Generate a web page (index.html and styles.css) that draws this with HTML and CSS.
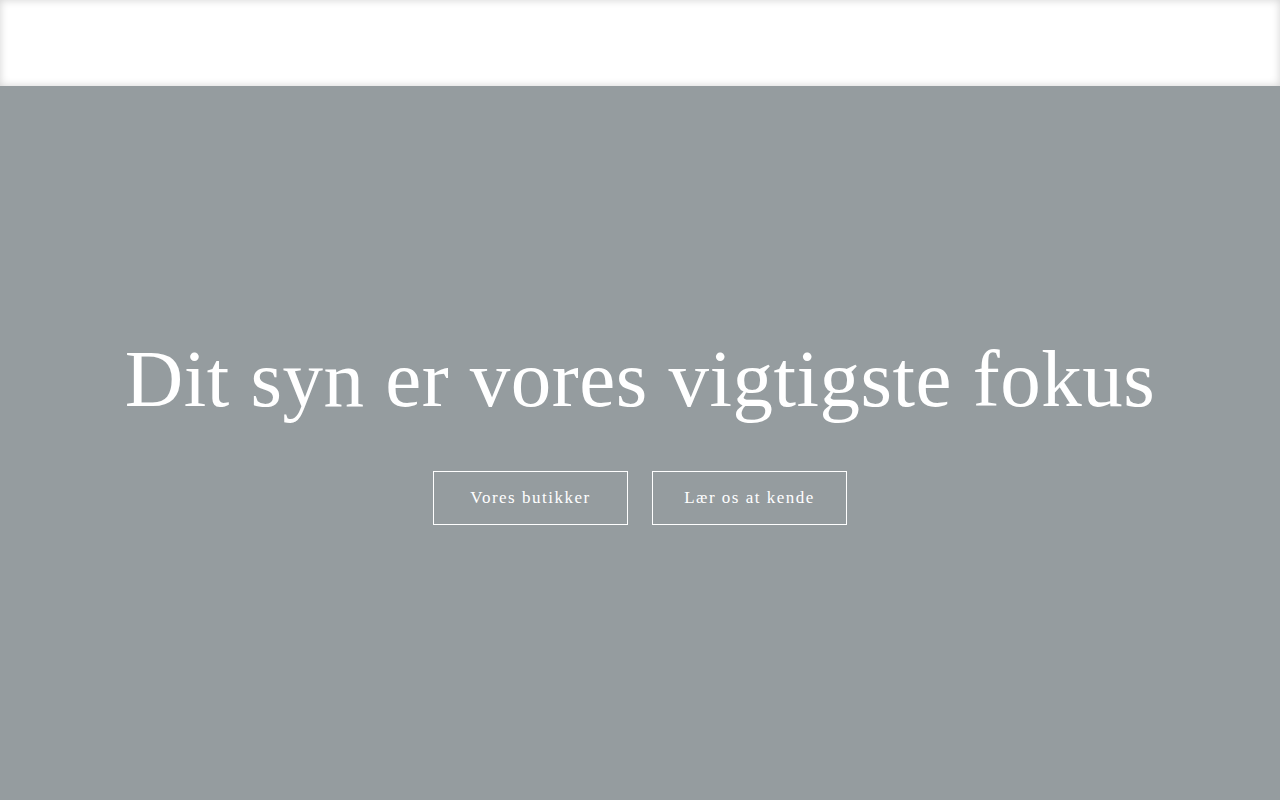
FILE: index.html
```html
<!DOCTYPE html>
<html lang="da">
<head>
    <meta charset="UTF-8">
    <meta name="viewport" content="width=device-width, initial-scale=1.0">
    <title>Dit syn er vores vigtigste fokus</title>
    <link rel="stylesheet" href="styles.css">
</head>
<body>

<header class="site-header"></header>

<section class="hero">
    <div class="hero-content">
        <h1 class="hero-title">Dit syn er vores vigtigste fokus</h1>
        <div class="hero-buttons">
            <a class="hero-btn" href="#">Vores butikker</a>
            <a class="hero-btn" href="#">Lær os at kende</a>
        </div>
    </div>
</section>

</body>
</html>
```

FILE: styles.css
```css
html, body {
    margin: 0;
    padding: 0;
}

body {
    font-family: "Liberation Serif", "DejaVu Serif", serif;
    background-color: #959c9f;
    height: 800px;
    overflow: hidden;
}

.site-header {
    height: 86px;
    background-color: #fff;
    box-shadow: inset 0 0 8px rgba(0, 0, 0, 0.18);
}

.hero {
    height: 714px;
    background-color: #959c9f;
    display: flex;
    justify-content: center;
    align-items: center;
}

.hero-content {
    display: flex;
    flex-direction: column;
    align-items: center;
    margin-top: -32px;
}

.hero-title {
    margin: 0;
    color: #fff;
    font-weight: 400;
    font-size: 81px;
    line-height: 100px;
    letter-spacing: 0.5px;
}

.hero-buttons {
    display: flex;
    gap: 24px;
    margin-top: 42px;
}

.hero-btn {
    display: flex;
    align-items: center;
    justify-content: center;
    width: 193px;
    height: 52px;
    border: 1px solid #fff;
    color: #fff;
    text-decoration: none;
    font-size: 17px;
    letter-spacing: 1.5px;
}
```
